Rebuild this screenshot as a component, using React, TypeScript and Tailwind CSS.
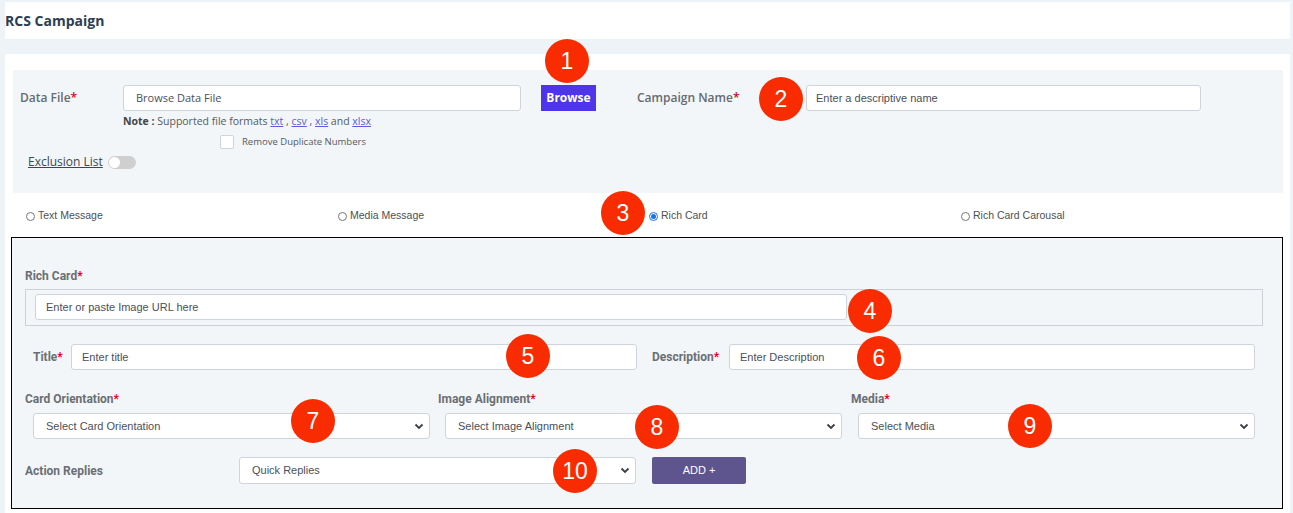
import React from 'react';

const label = "font-['Open_Sans',sans-serif] text-[12px] font-semibold text-[#666b70]";
const boxLabel = "font-['Roboto',sans-serif] text-[12px] font-bold text-[#6b6f73]";
const field =
  "h-[26px] rounded-[3px] border border-[#cfd4da] bg-white flex items-center font-['Liberation_Sans',Arial,sans-serif] text-[11px] text-[#4a5058]";

function Req() {
  return <span className="text-[#e0001b]">*</span>;
}

function Chevron() {
  return (
    <svg width="10" height="7" viewBox="0 0 10 7" className="ml-auto mr-[5px]">
      <path d="M1.5 1.5 L5 5 L8.5 1.5" fill="none" stroke="#3b3f45" strokeWidth="1.8" />
    </svg>
  );
}

function Select({ text, className }: { text: string; className: string }) {
  return (
    <div className={`${field} pl-[12px] ${className}`}>
      <span>{text}</span>
      <Chevron />
    </div>
  );
}

function Radio({ text, checked }: { text: string; checked?: boolean }) {
  return (
    <div className="flex items-center gap-[3px] font-['Liberation_Sans',Arial,sans-serif] text-[10.5px] text-[#4b5056]">
      {checked ? (
        <span className="w-[9px] h-[9px] rounded-full border border-[#1a73e8] flex items-center justify-center">
          <span className="w-[5px] h-[5px] rounded-full bg-[#1a73e8]" />
        </span>
      ) : (
        <span className="w-[9px] h-[9px] rounded-full border border-[#767676] bg-white" />
      )}
      <span>{text}</span>
    </div>
  );
}

const badges: [number, number, number][] = [
  [1, 567, 61],
  [2, 781, 99],
  [3, 623, 213],
  [4, 870, 311],
  [5, 528, 356],
  [6, 879, 358],
  [7, 313, 421],
  [8, 657, 427],
  [9, 1030, 426],
  [10, 575, 471],
];

export default function App() {
  return (
    <div className="relative w-[1293px] h-[513px] overflow-hidden bg-[#edf3f7] pl-[5px] pr-[3px] pt-[2px]">
      <div className="h-[37px] bg-white flex items-center font-['Open_Sans',sans-serif] text-[14px] font-bold text-[#2d3e50]">
        RCS Campaign
      </div>

      <div className="mt-[15px] bg-white pt-[16px] pb-[10px]">
        {/* upload panel */}
        <div className="ml-[8px] mr-[7px] bg-[#f2f6f9] h-[123px] pt-[15px] pl-[7px]">
          <div className="flex items-center h-[26px]">
            <div className={`${label} w-[103px]`}>
              Data File<Req />
            </div>
            <div className={`${field} w-[398px] pl-[12px] font-['Open_Sans',sans-serif] text-[11px]`}>Browse Data File</div>
            <div className="ml-[20px] w-[55px] h-[26px] bg-[#4f35e8] flex items-center justify-center font-['Open_Sans',sans-serif] text-[12px] font-bold text-white">
              Browse
            </div>
            <div className={`${label} ml-[41px] w-[169px]`}>
              Campaign Name<Req />
            </div>
            <div className={`${field} w-[395px] pl-[9px]`}>Enter a descriptive name</div>
          </div>
          <div className="ml-[103px] mt-[3px] font-['Open_Sans',sans-serif] text-[10.5px] text-[#555a60]">
            <span className="font-bold text-[#444]">Note :</span> Supported file formats{' '}
            <span className="underline text-[#5b5bdb]">txt</span> , <span className="underline text-[#5b5bdb]">csv</span> ,{' '}
            <span className="underline text-[#5b5bdb]">xls</span> and <span className="underline text-[#5b5bdb]">xlsx</span>
          </div>
          <div className="ml-[200px] mt-[5px] flex items-center gap-[8px]">
            <span className="w-[14px] h-[14px] border border-[#d0d4d8] bg-white rounded-[2px]" />
            <span className="font-['Open_Sans',sans-serif] text-[9.5px] text-[#555a60]">Remove Duplicate Numbers</span>
          </div>
          <div className="ml-[8px] mt-[4px] flex items-center gap-[5px]">
            <span className="font-['Open_Sans',sans-serif] text-[12px] text-[#3d4750] underline">Exclusion List</span>
            <span className="w-[28px] h-[13px] rounded-full bg-[#cfcfcf] flex items-center pl-[1px]">
              <span className="w-[11px] h-[11px] rounded-full bg-white" />
            </span>
          </div>
        </div>

        {/* message type */}
        <div className="h-[44px] flex items-center pl-[21px] pt-[2px]">
          <div className="w-[312px]"><Radio text="Text Message" /></div>
          <div className="w-[311px]"><Radio text="Media Message" /></div>
          <div className="w-[312px]"><Radio text="Rich Card" checked /></div>
          <div><Radio text="Rich Card Carousal" /></div>
        </div>

        {/* rich card box */}
        <div className="ml-[6px] mr-[7px] border border-black bg-[#f2f6f9] h-[272px] pt-[29px] px-[13px]">
          <div className={boxLabel}>
            Rich Card<Req />
          </div>
          <div className="mt-[4px] mr-[6px] border border-[#cdd1d5] h-[37px] pt-[4px] pl-[9px]">
            <div className={`${field} w-[812px] pl-[10px]`}>Enter or paste Image URL here</div>
          </div>

          <div className="mt-[18px] flex items-center h-[26px]">
            <div className={`${boxLabel} pl-[8px] w-[46px]`}>
              Title<Req />
            </div>
            <div className={`${field} w-[566px] pl-[10px]`}>Enter title</div>
            <div className={`${boxLabel} ml-[15px] w-[77px]`}>
              Description<Req />
            </div>
            <div className={`${field} w-[526px] pl-[10px]`}>Enter Description</div>
          </div>

          <div className="mt-[20px] flex">
            <div className="w-[413px]">
              <div className={boxLabel}>
                Card Orientation<Req />
              </div>
              <Select text="Select Card Orientation" className="mt-[5px] ml-[8px] w-[397px]" />
            </div>
            <div className="w-[413px]">
              <div className={boxLabel}>
                Image Alignment<Req />
              </div>
              <Select text="Select Image Alignment" className="mt-[5px] ml-[7px] w-[397px]" />
            </div>
            <div className="w-[413px]">
              <div className={boxLabel}>
                Media<Req />
              </div>
              <Select text="Select Media" className="mt-[5px] ml-[7px] w-[397px]" />
            </div>
          </div>

          <div className="mt-[18px] flex items-center h-[27px]">
            <div className={`${boxLabel} w-[214px]`}>Action Replies</div>
            <Select text="Quick Replies" className="w-[397px] h-[27px]" />
            <div className="ml-[16px] w-[94px] h-[27px] rounded-[2px] bg-[#5e548e] flex items-center justify-center font-['Liberation_Sans',Arial,sans-serif] text-[11px] text-white">
              ADD +
            </div>
          </div>
        </div>
      </div>

      {badges.map(([n, x, y]) => (
        <div
          key={n}
          className="absolute w-[44px] h-[44px] rounded-full bg-[#f82c00] flex items-center justify-center font-['Liberation_Sans',Arial,sans-serif] text-[23px] text-white"
          style={{ left: x - 22, top: y - 22 }}
        >
          {n}
        </div>
      ))}
    </div>
  );
}
